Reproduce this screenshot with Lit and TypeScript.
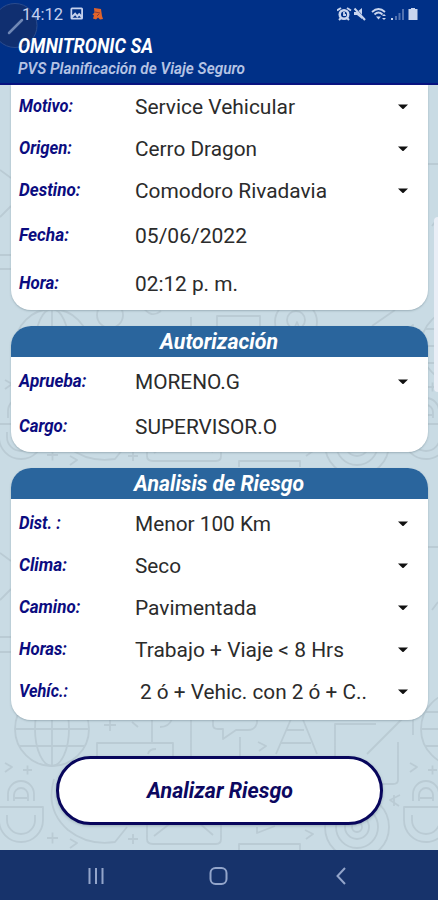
import { LitElement, html, svg, css } from "lit";
import { customElement } from "lit/decorators.js";

interface Row { label: string; lw: number; value: string; vw: number; h: number; menu?: boolean; indent?: boolean }

const viaje: Row[] = [
  { label: "Motivo:", lw: 54, value: "Service Vehicular", vw: 160, h: 42, menu: true },
  { label: "Origen:", lw: 53, value: "Cerro Dragon", vw: 122, h: 42, menu: true },
  { label: "Destino:", lw: 61.5, value: "Comodoro Rivadavia", vw: 192, h: 45, menu: true },
  { label: "Fecha:", lw: 50, value: "05/06/2022", vw: 112, h: 48 },
  { label: "Hora:", lw: 40, value: "02:12 p. m.", vw: 103, h: 40 },
];
const autorizacion: Row[] = [
  { label: "Aprueba:", lw: 67.5, value: "MORENO.G", vw: 105, h: 45, menu: true },
  { label: "Cargo:", lw: 48.5, value: "SUPERVISOR.O", vw: 142, h: 45 },
];
const riesgo: Row[] = [
  { label: "Dist. :", lw: 42, value: "Menor 100 Km", vw: 136, h: 42, menu: true },
  { label: "Clima:", lw: 48, value: "Seco", vw: 46, h: 42, menu: true },
  { label: "Camino:", lw: 61.5, value: "Pavimentada", vw: 122, h: 42, menu: true },
  { label: "Horas:", lw: 48, value: "Trabajo + Viaje < 8 Hrs", vw: 209, h: 42, menu: true },
  { label: "Vehíc.:", lw: 49, value: "2 ó + Vehic. con 2 ó + C..", vw: 227, h: 42, menu: true, indent: true },
];

// A single line of text condensed or widened to a given advance width.
const line = (text: string, width: number, cls: string) => html`
  <svg class="line ${cls}" width=${width} height="24">
    <text x="0" y="18" textLength=${width} lengthAdjust="spacingAndGlyphs">${text}</text>
  </svg>`;

const globe = (x: number, y: number) => svg`<g transform="translate(${x} ${y})">
  <circle r="37"/><ellipse rx="17" ry="37"/><path d="M0-37V37M-37 0H37M-32-17H32M-32 17H32"/></g>`;
const lock = (x: number, y: number) => svg`<g transform="translate(${x} ${y})">
  <path d="M-13-7V-14a13 13 0 0 1 26 0V-7M-7-7V-13a7 7 0 0 1 14 0V-7M-6-10H6M-22-1H22V12a22 22 0 0 1-44 0ZM-14 7V12a14 14 0 0 0 28 0V7"/></g>`;
const target = (x: number, y: number) => svg`<g transform="translate(${x} ${y})">
  <circle r="32"/><circle r="21"/><circle r="12"/><circle r="5"/></g>`;
const marks = (x: number, y: number) => svg`<path d="M${x} ${y}l7 4-7 5M${x + 18} ${y + 7}h9m-4.500-4.500v9"/>`;

const tile = (y: number) => svg`<g transform="translate(0 ${y})">
  ${globe(52, 29)} ${globe(458, 29)} ${lock(21, 108)} ${lock(426, 108)} ${target(357, 127)}
  ${marks(5, 63)} ${marks(410, 63)}
  <path d="M97 57V43H173V57M104 25h12m-6-6v12M132 22l6 5M152 10V42M160 27q9 0 12-8M148 54q1-5 8-5M191 0V57M213 20v5q0 4 5 4h5v10l13-9h12q7 0 9-7V20M240 57V37M258 42l8 4-7 5M276 54L297 5 317 54M281 43H311M287 30H304M335 57V24H376M367 54L413 8V35M398 42V80q0 4-5 4h-10"/>
  <path d="M54 79Q45 110 68 130 88 146 115 142L127 127M147 125V139q0 5 6 5H216q5 0 5-5V125M154 136l18-14M198 122l15 13M239 150v-6H300v6M257 127v6l18-7M305 130l8 4-7 5M400 95l-10 5 9 6m-5-11v11M47 138h11m-5.500-5.500v11M70 139l7 4-7 5M133 134v10m-5-5h10"/>
</g>`;

@customElement("app-root")
export class AppRoot extends LitElement {
  static styles = css`
    :host { display: block; width: 438px; height: 900px; overflow: hidden; font-family: Roboto, sans-serif; }
    .screen { position: relative; display: flex; flex-direction: column; height: 900px; background: #c9dbe4; }
    .doodles { position: absolute; inset: 0; fill: none; stroke: #bacbd4; stroke-width: 1.8; stroke-linejoin: round; }
    .line { display: block; overflow: visible; flex: none; }
    header { position: relative; box-sizing: border-box; height: 85px; flex: none; background: #003087; border-bottom: 2px solid #07127f; }
    .status { position: relative; display: flex; align-items: center; justify-content: space-between; height: 28px; padding: 0 18px 0 22px; }
    .group { display: flex; align-items: center; }
    .clock { font-size: 17px; fill: #c5d1ed; }
    .pen { position: absolute; left: -16px; top: 3px; }
    .titles { position: relative; padding: 7px 0 0 18px; }
    .title { font-size: 19.5px; font-weight: 700; font-style: italic; fill: #fff; }
    .sub { margin-top: -3px; font-size: 16px; font-weight: 600; font-style: italic; fill: #b5c3e4; }
    main { position: relative; flex: 1; display: flex; flex-direction: column; padding: 0 10px 0 11px; }
    .card { box-sizing: border-box; margin-bottom: 16px; background: #fff; border-radius: 20px; overflow: hidden; box-shadow: 0 1px 2px #7d929c99; }
    .trip { height: 225px; border-radius: 0 0 20px 20px; }
    .auth { height: 126px; }
    .risk { height: 252px; margin-bottom: 0; }
    .head { display: flex; justify-content: center; height: 31px; padding: 5px 1px 0 0; box-sizing: border-box; background: #2a659d; }
    .headtext { font-size: 22px; font-weight: 700; font-style: italic; fill: #fff; }
    .row { display: grid; grid-template-columns: 115.5px 1fr 31.5px; padding-left: 8px; align-items: start; }
    .trip .rows { padding-top: 9px; }
    .auth .rows, .risk .rows { padding-top: 12px; }
    .label { font-size: 17.5px; font-weight: 700; font-style: italic; fill: #0b0c80; }
    .value { margin-top: 2px; font-size: 20.5px; fill: #2b2b2b; }
    .indent { margin-left: 5px; }
    .arrow { margin-top: 9px; fill: #111; }
    .button { align-self: center; display: flex; justify-content: center; align-items: center; box-sizing: border-box; width: 327px; height: 69px; margin: 36px 0 0; padding: 0; border: 3px solid #08065c; border-radius: 35px; background: #fff; box-shadow: 0 1px 3px #7d929c99; font-family: inherit; }
    .btntext { margin-top: 2px; font-size: 22px; font-weight: 700; font-style: italic; fill: #0c0860; }
    .thumb { position: absolute; right: 0; top: 217px; width: 4px; height: 175px; border-radius: 4px 0 0 4px; background: #e9eef6; }
    nav { position: relative; flex: none; height: 50px; display: flex; background: #17336b; }
    nav svg { fill: none; stroke: #93a5ca; stroke-width: 2; }
  `;

  row(r: Row) {
    return html`<div class="row" style="height:${r.h}px">
      ${line(r.label, r.lw, "label")}
      ${line(r.value, r.vw, r.indent ? "value indent" : "value")}
      ${r.menu ? html`<svg class="arrow" width="12" height="8"><path d="M1 1.5H11L6.7 5.7Q6 6.2 5.3 5.7Z"/></svg>` : ""}
    </div>`;
  }

  card(cls: string, rows: Row[], title = "", width = 0) {
    return html`<section class="card ${cls}">
      ${title ? html`<div class="head">${line(title, width, "headtext")}</div>` : ""}
      <div class="rows">${rows.map((r) => this.row(r))}</div>
    </section>`;
  }

  render() {
    return html`<div class="screen">
      <svg class="doodles" width="438" height="900">
        ${tile(-66)}${tile(317)}${tile(700)}
        <circle cx="110" cy="315" r="13"/><path d="M143 307q8 12 18 4M217 326V316H260V326M372 326L395 310M0 170l11 8M0 217l11-11M0 255H11M0 269H11M0 553l11 8M0 600l11-11M0 637H11M0 652H11M428 164h10M428 547h10M432 226l6-8M432 610l6-8"/>
        <circle cx="296" cy="322" r="21"/><circle cx="296" cy="320" r="9"/>
      </svg>
      <header>
        <svg class="pen" width="54" height="46"><circle cx="31" cy="22.5" r="22" fill="#102f70" stroke="#2c4c8d"/><path d="M25 30L38 17" stroke="#7088b5" stroke-width="2.5" stroke-linecap="round"/></svg>
        <div class="status">
          <div class="group">
            ${line("14:12", 41, "clock")}
            <svg width="48" height="20">
              <path fill="#c5d1ed" fill-rule="evenodd" d="M9 3.500h9.500q1.500 0 1.500 1.500v9q0 1.500-1.500 1.500H9q-1.500 0-1.500-1.500V5Q7.500 3.500 9 3.500ZM9.200 5.200v6l3-3 2 2.500 2-2 2 2V5.200ZM9.500 13.700h8.500l-1.800-2-2 2-2-2.500Z"/>
              <path fill="#e0642c" d="M31 4l7 1 1 7 1 3-3 .5-2-2-2 2-3-1 1-3-1.500-1 2-2Z"/><path stroke="#8b3d36" d="M32 8l5 1M34 12l2-2"/>
            </svg>
          </div>
          <svg width="83" height="20" fill="#c9d5ee">
            <g transform="translate(0 4)"><circle cx="7" cy="6.500" r="5.500"/><path d="M0 2.500L4 0M14 2.500L10 0M2 12l2-2M12 12l-2-2" stroke="#c9d5ee" stroke-width="2"/><circle cx="7" cy="6.500" r="3" fill="#003087"/><path d="M7 4v3h2" fill="none" stroke="#c9d5ee" stroke-width="1.800"/></g>
            <path d="M17 8h3l5-4v11l-5-4h-3Z"/><path d="M18 4L29 16" stroke="#003087" stroke-width="1.200"/><path d="M17.500 4.500L28 16" stroke="#c9d5ee" stroke-width="2"/>
            <path d="M35 8q6.500-6 13 0M37.500 10.500q4-4 8 0" fill="none" stroke="#c9d5ee" stroke-width="1.800"/><path d="M39 12.500h5l-2.500 3ZM45 12l2-2 2 2ZM45 14h4l-2 2Z"/>
            <path d="M54 14h2v2h-2Z"/><path d="M58 12h2v4h-2ZM61.500 9h2v7h-2ZM65 5h2v11h-2Z" opacity=".4"/>
            <path d="M71.500 5h2.500V4h4v1h2.500v11h-9Z"/>
          </svg>
        </div>
        <div class="titles">${line("OMNITRONIC SA", 135, "title")}${line("PVS Planificación de Viaje Seguro", 227, "sub")}</div>
      </header>
      <main>
        ${this.card("trip", viaje)}
        ${this.card("auth", autorizacion, "Autorización", 118)}
        ${this.card("risk", riesgo, "Analisis de Riesgo", 170)}
        <button class="button">${line("Analizar Riesgo", 146, "btntext")}</button>
      </main>
      <div class="thumb"></div>
      <nav>
        <svg width="438" height="50"><path d="M89.500 18V34M96 18V34M102.500 18V34"/><rect x="210.500" y="18" width="16" height="16" rx="5"/><path d="M345 18L337.500 26 345 34"/></svg>
      </nav>
    </div>`;
  }
}
